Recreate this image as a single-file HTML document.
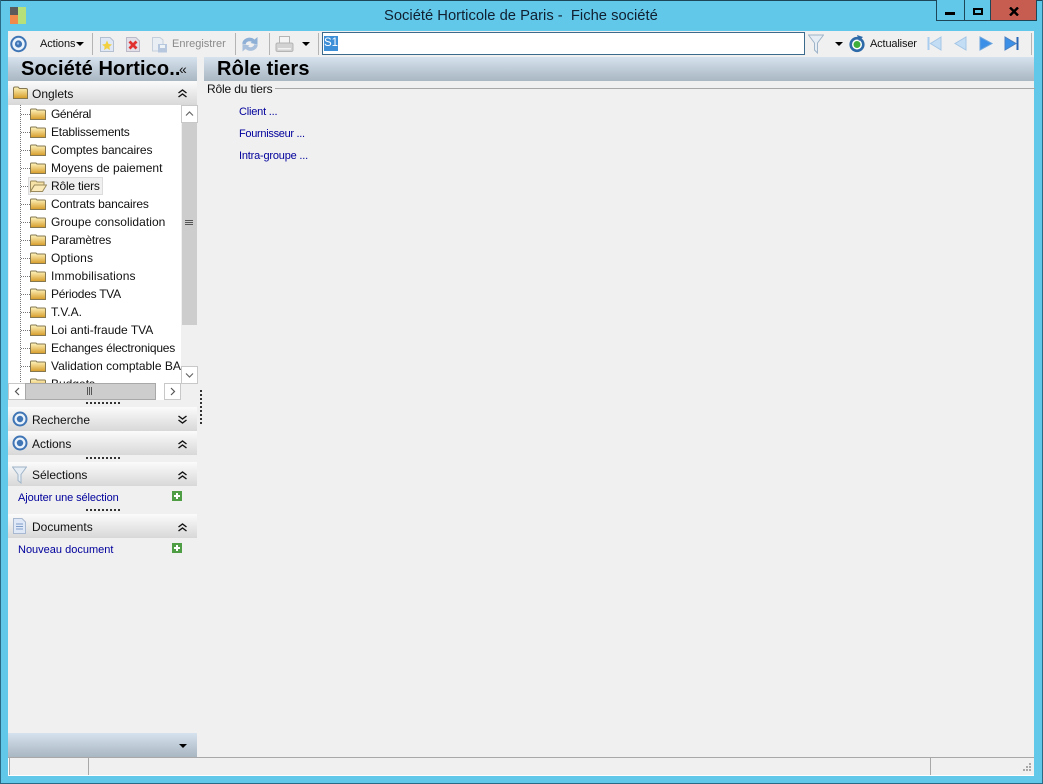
<!DOCTYPE html>
<html><head><meta charset="utf-8"><style>
html,body{margin:0;padding:0}
body{width:1043px;height:784px;overflow:hidden;position:relative;background:#62c8ea;font-family:"Liberation Sans",sans-serif;font-size:12px;color:#111}
div,span,svg{position:absolute}
.t{white-space:nowrap;line-height:14px}
.l{color:#00009c;font-size:11px}
.hd{background:linear-gradient(#d6e2ee,#a9b7c3)}
.gb{left:9px;width:188px;height:24px;background:linear-gradient(#fbfbfb,#d8d8d8)}
.sep{width:1px;height:22px;top:33px;background:#b4b4b4}
.dots{width:34px;height:2px;left:86px;background:repeating-linear-gradient(90deg,#333 0 2px,transparent 2px 4px)}
.tree{left:30px;white-space:nowrap}
</style></head><body>
<div style="left:0;top:0;width:1043px;height:1px;background:#1d4658"></div>
<div style="left:0;top:0;width:1px;height:784px;background:#2a6a84"></div>
<div style="left:1042px;top:0;width:1px;height:784px;background:#2a6a84"></div>
<div style="left:0;top:783px;width:1043px;height:1px;background:#2a6a84"></div>
<svg style="left:10px;top:7px" width="16" height="17"><rect width="8" height="8" fill="#5b5b5b"/><rect y="8" width="8" height="9" fill="#f08a4b"/><rect x="8" width="8" height="17" fill="#b5e07a"/></svg>
<div class="t" style="left:384px;top:8px;font-size:14.75px;line-height:16px;color:#102030">Société Horticole de Paris -&nbsp; Fiche société</div>
<div style="left:936px;top:0;width:101px;height:21px;border:1px solid #1d4658;border-top:0;box-sizing:border-box;background:#62c8ea"></div>
<div style="left:964px;top:0;width:1px;height:21px;background:#1d4658"></div>
<div style="left:990px;top:0;width:47px;height:21px;background:#c75c50;border:1px solid #1d4658;border-top:0;box-sizing:border-box"></div>
<div style="left:945px;top:12px;width:10px;height:3px;background:#000"></div>
<div style="left:973px;top:8px;width:6px;height:3px;border:2px solid #000"></div>
<svg style="left:1009px;top:7px" width="10" height="9"><path d="M1 0.5L9 8.5M9 0.5L1 8.5" stroke="#000" stroke-width="2.4"/></svg>
<div style="left:8px;top:31px;width:1026px;height:745px;background:#f0f0f0"></div>
<svg style="left:10px;top:35px" width="18" height="18"><circle cx="8.5" cy="9" r="7.2" fill="#eaf2fb" stroke="#3f75b5" stroke-width="2"/><circle cx="8.5" cy="9" r="3.600" fill="#3f75b5"/><circle cx="8" cy="8.500" r="1.200" fill="#8fb8e8"/></svg>
<div class="t" style="left:40px;top:37px;font-size:11px;letter-spacing:-.1px">Actions</div>
<svg style="left:76px;top:42px" width="9" height="5"><path d="M0 0H8L4 4Z" fill="#000"/></svg>
<div class="sep" style="left:92px"></div>
<svg style="left:99px;top:36px" width="16" height="17"><path d="M1.5 1.5H11L14.5 5V15.5H1.5Z" fill="#dfe8f4" stroke="#b4bfd0"/><path d="M8 4.500L9.500 8L13 8.500L10.300 10.700L11 14L8 12.300L5 14L5.700 10.700L3 8.500L6.500 8Z" fill="#f2d040"/></svg>
<svg style="left:125px;top:36px" width="16" height="17"><path d="M1.5 1.5H11L14.5 5V15.5H1.5Z" fill="#e2dfe8" stroke="#b9b9c8"/><path d="M4.500 5.500L11.500 12.500M11.500 5.500L4.500 12.500" stroke="#e03030" stroke-width="2.800"/></svg>
<svg style="left:152px;top:37px" width="16" height="16"><path d="M0.5 0.5H8L11 3V14H0.5Z" fill="#e9eef4" stroke="#c5cfdb"/><rect x="6" y="7" width="9" height="8.5" fill="#b7c8de"/><rect x="8" y="8" width="5" height="3" fill="#eef3f8"/></svg>
<div class="t" style="left:172px;top:37px;font-size:11px;color:#8a8a8a">Enregistrer</div>
<div class="sep" style="left:235px"></div>
<svg style="left:241px;top:35px" width="18" height="18"><path d="M3 9C3.500 5 8.500 3 12.500 5.800" fill="none" stroke="#8fb0d6" stroke-width="3.600"/><path d="M16.500 2L16.500 9.500L9.500 8Z" fill="#8fb0d6"/><path d="M15 9.500C14.500 13.500 9.500 15.500 5.500 12.700" fill="none" stroke="#a9c0dc" stroke-width="3.600"/><path d="M1.500 16.500L1.500 9L8.500 10.500Z" fill="#a9c0dc"/></svg>
<div class="sep" style="left:269px"></div>
<svg style="left:275px;top:35px" width="19" height="18"><rect x="4.500" y="1.500" width="10" height="7" fill="#f4f4f4" stroke="#b4b4b4"/><path d="M1 9.500Q1 8 3 8H16Q18 8 18 9.500V15Q18 16.500 16 16.500H3Q1 16.500 1 15Z" fill="#d2d2d2" stroke="#b4b4b4"/><rect x="3" y="13" width="13" height="1.500" fill="#f2f2f2"/></svg>
<svg style="left:302px;top:42px" width="9" height="5"><path d="M0 0H8L4 4Z" fill="#000"/></svg>
<div class="sep" style="left:318px"></div>
<div style="left:322px;top:32px;width:483px;height:23px;box-sizing:border-box;border:1px solid #3c6a8c;background:#fff"></div>
<div class="t" style="left:324px;top:36px;width:14px;height:15px;line-height:15px;background:#3d8fd8;color:#fff;font-size:11.5px">S1</div>
<svg style="left:808px;top:34px" width="16" height="20"><path d="M0.500 1H15.500L9.500 9V19L6.500 16V9Z" fill="#e6edf4" stroke="#9fb4c8"/></svg>
<svg style="left:835px;top:42px" width="9" height="5"><path d="M0 0H8L4 4Z" fill="#000"/></svg>
<svg style="left:848px;top:35px" width="18" height="18"><circle cx="9" cy="9.500" r="6.300" fill="#fff" stroke="#2f6aa8" stroke-width="2.600"/><circle cx="9" cy="9.500" r="3.500" fill="#3fae3a"/><path d="M9 0L15 2L11 6Z" fill="#2f6aa8"/></svg>
<div class="t" style="left:870px;top:37px;font-size:11px;letter-spacing:-.15px">Actualiser</div>
<svg style="left:925px;top:35px" width="18" height="17"><rect x="2.500" y="2" width="2" height="13" fill="#a9cdee"/><path d="M16 2V15L5.500 8.500Z" fill="#c3ddf4" stroke="#a4c6e6"/></svg>
<svg style="left:952px;top:35px" width="16" height="17"><path d="M14 2V15L3 8.500Z" fill="#c3ddf4" stroke="#a4c6e6"/></svg>
<svg style="left:978px;top:35px" width="16" height="17"><path d="M2 2V15L14 8.500Z" fill="#3b8fe6" stroke="#6aa4dc"/></svg>
<svg style="left:1003px;top:35px" width="18" height="17"><path d="M2 2V15L13 8.500Z" fill="#3b8fe6" stroke="#4a7fc0"/><rect x="13.500" y="2" width="2" height="13" fill="#2a66b4"/></svg>
<div class="sep" style="left:1031px"></div>
<div class="hd" style="left:8px;top:57px;width:189px;height:24px"></div>
<div class="t" style="left:21px;top:58px;font-size:20px;line-height:22px;font-weight:bold;color:#000;letter-spacing:.1px">Société Hortico..</div>
<div class="t" style="left:179px;top:62px;font-size:14px;line-height:15px">«</div>
<div class="hd" style="left:204px;top:57px;width:830px;height:24px"></div>
<div class="t" style="left:217px;top:58px;font-size:20px;line-height:22px;font-weight:bold;color:#000;letter-spacing:.15px">Rôle tiers</div>
<div class="t" style="left:207px;top:82px;letter-spacing:-.15px">Rôle du tiers</div>
<div style="left:275px;top:88px;width:760px;height:1px;background:#a8a8a8"></div>
<div class="t l" style="left:239px;top:105px;letter-spacing:-.2px">Client ...</div>
<div class="t l" style="left:239px;top:127px;letter-spacing:-.3px">Fournisseur ...</div>
<div class="t l" style="left:239px;top:149px;letter-spacing:-.2px">Intra-groupe ...</div>
<div class="gb" style="top:81px;left:8px;width:189px"></div>
<svg style="left:13px;top:86px" width="15" height="14"><defs><linearGradient id="f" x1="0" y1="0" x2="0" y2="1"><stop offset="0" stop-color="#fff6c0"/><stop offset="1" stop-color="#d69c28"/></linearGradient></defs><path d="M0.500 2.500Q0.500 1 2 1H5L6.500 2.500H13Q14.500 2.500 14.500 4V12.500H0.500Z" fill="url(#f)" stroke="#85774f"/></svg>
<div class="t" style="left:32px;top:87px">Onglets</div>
<div style="left:9px;top:105px;width:173px;height:278px;background:#fff;overflow:hidden">
<svg style="left:0;top:0" width="30" height="278"><path d="M11.500 0V278" stroke="#777" stroke-dasharray="1 1"/><path d="M12 9.500H21M12 27.500H21M12 45.500H21M12 63.500H21M12 81.500H21M12 99.500H21M12 117.500H21M12 135.500H21M12 153.500H21M12 171.500H21M12 189.500H21M12 207.500H21M12 225.500H21M12 243.500H21M12 261.500H21" stroke="#777" stroke-dasharray="1 1"/></svg>
<div style="left:19px;top:72px;width:73px;height:16px;background:#f0f0f0;border:1px solid #dcdcdc"></div>
<svg style="left:20px;top:0" width="18" height="290"><defs><g id="d"><path d="M1.500 5Q1.500 4 2.500 4H7L8 5H15.500Q16.500 5 16.500 6V14.500H1.500Z" fill="url(#f)" stroke="#85774f"/></g></defs><use href="#d" y="0"/><use href="#d" y="18"/><use href="#d" y="36"/><use href="#d" y="54"/><use href="#d" y="90"/><use href="#d" y="108"/><use href="#d" y="126"/><use href="#d" y="144"/><use href="#d" y="162"/><use href="#d" y="180"/><use href="#d" y="198"/><use href="#d" y="216"/><use href="#d" y="234"/><use href="#d" y="252"/><use href="#d" y="270"/></svg>
<svg style="left:20px;top:72px" width="18" height="18"><path d="M1.500 14.500V5Q1.500 4 2.500 4H7L8 5H15V8H5.500Z" fill="#f6e2a6" stroke="#9b8a5c"/><path d="M1.500 14.500L5.500 8H17.500L13.500 14.500Z" fill="#fbeab8" stroke="#9b8a5c"/></svg>
<div class="t tree" style="left:42px;top:2px;letter-spacing:-.4px">Général</div>
<div class="t tree" style="left:42px;top:20px;letter-spacing:-.2px">Etablissements</div>
<div class="t tree" style="left:42px;top:38px;letter-spacing:-.12px">Comptes bancaires</div>
<div class="t tree" style="left:42px;top:56px">Moyens de paiement</div>
<div class="t tree" style="left:42px;top:74px;letter-spacing:-.2px">Rôle tiers</div>
<div class="t tree" style="left:42px;top:92px;letter-spacing:-.17px">Contrats bancaires</div>
<div class="t tree" style="left:42px;top:110px;letter-spacing:.05px">Groupe consolidation</div>
<div class="t tree" style="left:42px;top:128px;letter-spacing:-.2px">Paramètres</div>
<div class="t tree" style="left:42px;top:146px;letter-spacing:.1px">Options</div>
<div class="t tree" style="left:42px;top:164px;letter-spacing:.13px">Immobilisations</div>
<div class="t tree" style="left:42px;top:182px;letter-spacing:-.25px">Périodes TVA</div>
<div class="t tree" style="left:42px;top:200px">T.V.A.</div>
<div class="t tree" style="left:42px;top:218px">Loi anti-fraude TVA</div>
<div class="t tree" style="left:42px;top:236px;letter-spacing:-.18px">Echanges électroniques</div>
<div class="t tree" style="left:42px;top:254px">Validation comptable BA</div>
<div class="t tree" style="left:42px;top:272px">Budgets</div>
</div>
<div style="left:181px;top:105px;width:17px;height:278px;background:#f0f0f0"></div>
<div style="left:181px;top:105px;width:17px;height:18px;background:#fff;box-sizing:border-box;border:1px solid #c8c8c8"></div>
<div style="left:182px;top:123px;width:15px;height:202px;background:#cdcdcd"></div>
<div style="left:181px;top:366px;width:17px;height:18px;background:#fff;box-sizing:border-box;border:1px solid #c8c8c8"></div>
<svg style="left:185px;top:110px" width="9" height="8"><path d="M1 5.500L4.500 2L8 5.500" fill="none" stroke="#666" stroke-width="1.200"/></svg>
<svg style="left:185px;top:371px" width="9" height="8"><path d="M1 2.500L4.500 6L8 2.500" fill="none" stroke="#666" stroke-width="1.200"/></svg>
<svg style="left:185px;top:219px" width="8" height="8"><path d="M0 1.500H8M0 3.500H8M0 5.500H8" stroke="#555"/></svg>
<div style="left:8px;top:383px;width:173px;height:17px;background:#fff"></div>
<div style="left:8px;top:383px;width:18px;height:17px;background:#fff;box-sizing:border-box;border:1px solid #c8c8c8"></div>
<div style="left:25px;top:383px;width:131px;height:17px;background:#cdcdcd;box-sizing:border-box;border:1px solid #a8a8a8"></div>
<div style="left:164px;top:383px;width:17px;height:17px;background:#fff;box-sizing:border-box;border:1px solid #c8c8c8"></div>
<svg style="left:14px;top:387px" width="7" height="10"><path d="M5 1L1.500 4.500L5 8" fill="none" stroke="#555" stroke-width="1.200"/></svg>
<svg style="left:169px;top:387px" width="7" height="10"><path d="M2 1L5.500 4.500L2 8" fill="none" stroke="#555" stroke-width="1.200"/></svg>
<svg style="left:86px;top:387px" width="8" height="8"><path d="M1.500 0V8M3.500 0V8M5.500 0V8" stroke="#555"/></svg>
<div class="dots" style="top:402px"></div>
<div style="left:200px;top:390px;width:2px;height:34px;background:repeating-linear-gradient(#333 0 2px,transparent 2px 4px)"></div>
<div class="gb" style="top:407px;left:8px;width:189px"></div>
<svg style="left:11px;top:410px" width="18" height="18"><circle cx="9" cy="9" r="6.500" fill="#eaf2fb" stroke="#3f75b5" stroke-width="2"/><circle cx="9" cy="9" r="3.200" fill="#3f75b5"/></svg>
<div class="t" style="left:32px;top:413px">Recherche</div>
<div class="gb" style="top:431px;left:8px;width:189px"></div>
<svg style="left:11px;top:434px" width="18" height="18"><circle cx="9" cy="9" r="6.500" fill="#eaf2fb" stroke="#3f75b5" stroke-width="2"/><circle cx="9" cy="9" r="3.200" fill="#3f75b5"/></svg>
<div class="t" style="left:32px;top:437px">Actions</div>
<div class="dots" style="top:457px"></div>
<div class="gb" style="top:462px;left:8px;width:189px"></div>
<svg style="left:12px;top:466px" width="15" height="18"><path d="M0.500 1H14.500L9 8.500V17L6 14.500V8.500Z" fill="#e6edf4" stroke="#9fb4c8"/></svg>
<div class="t" style="left:32px;top:468px">Sélections</div>
<div class="t l" style="left:18px;top:491px;letter-spacing:-.1px">Ajouter une sélection</div>
<svg style="left:172px;top:491px" width="10" height="10"><rect width="10" height="10" fill="#4f9d45"/><path d="M5 2V8M2 5H8" stroke="#fff" stroke-width="2"/></svg>
<div class="dots" style="top:509px"></div>
<div class="gb" style="top:514px;left:8px;width:189px"></div>
<svg style="left:13px;top:518px" width="13" height="16"><path d="M0.500 0.500H9L12.500 4V15.500H0.500Z" fill="#dfe8f6" stroke="#a8b8d0"/><path d="M3 6H10M3 8.500H10M3 11H10" stroke="#7f9cc8"/></svg>
<div class="t" style="left:32px;top:520px">Documents</div>
<div class="t l" style="left:18px;top:543px">Nouveau document</div>
<svg style="left:172px;top:543px" width="10" height="10"><rect width="10" height="10" fill="#4f9d45"/><path d="M5 2V8M2 5H8" stroke="#fff" stroke-width="2"/></svg>
<svg style="left:177px;top:415px" width="11" height="10"><path d="M1.500 1L5.500 4L9.500 1M1.500 5L5.500 8L9.500 5" fill="none" stroke="#111" stroke-width="1.400"/></svg>
<svg style="left:177px;top:440px" width="11" height="10"><path d="M1.500 4L5.500 1L9.500 4M1.500 8L5.500 5L9.500 8" fill="none" stroke="#111" stroke-width="1.400"/></svg>
<svg style="left:177px;top:471px" width="11" height="10"><path d="M1.500 4L5.500 1L9.500 4M1.500 8L5.500 5L9.500 8" fill="none" stroke="#111" stroke-width="1.400"/></svg>
<svg style="left:177px;top:523px" width="11" height="10"><path d="M1.500 4L5.500 1L9.500 4M1.500 8L5.500 5L9.500 8" fill="none" stroke="#111" stroke-width="1.400"/></svg>
<svg style="left:177px;top:89px" width="11" height="10"><path d="M1.500 4L5.500 1L9.500 4M1.500 8L5.500 5L9.500 8" fill="none" stroke="#111" stroke-width="1.400"/></svg>
<div class="hd" style="left:8px;top:733px;width:189px;height:24px"></div>
<svg style="left:179px;top:744px" width="9" height="5"><path d="M0 0H8L4 4Z" fill="#000"/></svg>
<div style="left:8px;top:757px;width:1026px;height:1px;background:#a8a8a8"></div>
<div style="left:8px;top:775px;width:1026px;height:1px;background:#fff"></div>
<div style="left:8px;top:758px;width:1px;height:18px;background:#fff"></div>
<div style="left:9px;top:758px;width:1px;height:17px;background:#a8a8a8"></div>
<div style="left:88px;top:758px;width:1px;height:17px;background:#a8a8a8"></div>
<div style="left:930px;top:758px;width:1px;height:17px;background:#a8a8a8"></div>
<svg style="left:1020px;top:763px" width="12" height="12"><path d="M9 0h2v2H9zM6 3h2v2H6zM9 3h2v2H9zM3 6h2v2H3zM6 6h2v2H6zM9 6h2v2H9z" fill="#a8a8a8"/></svg>
</body></html>
